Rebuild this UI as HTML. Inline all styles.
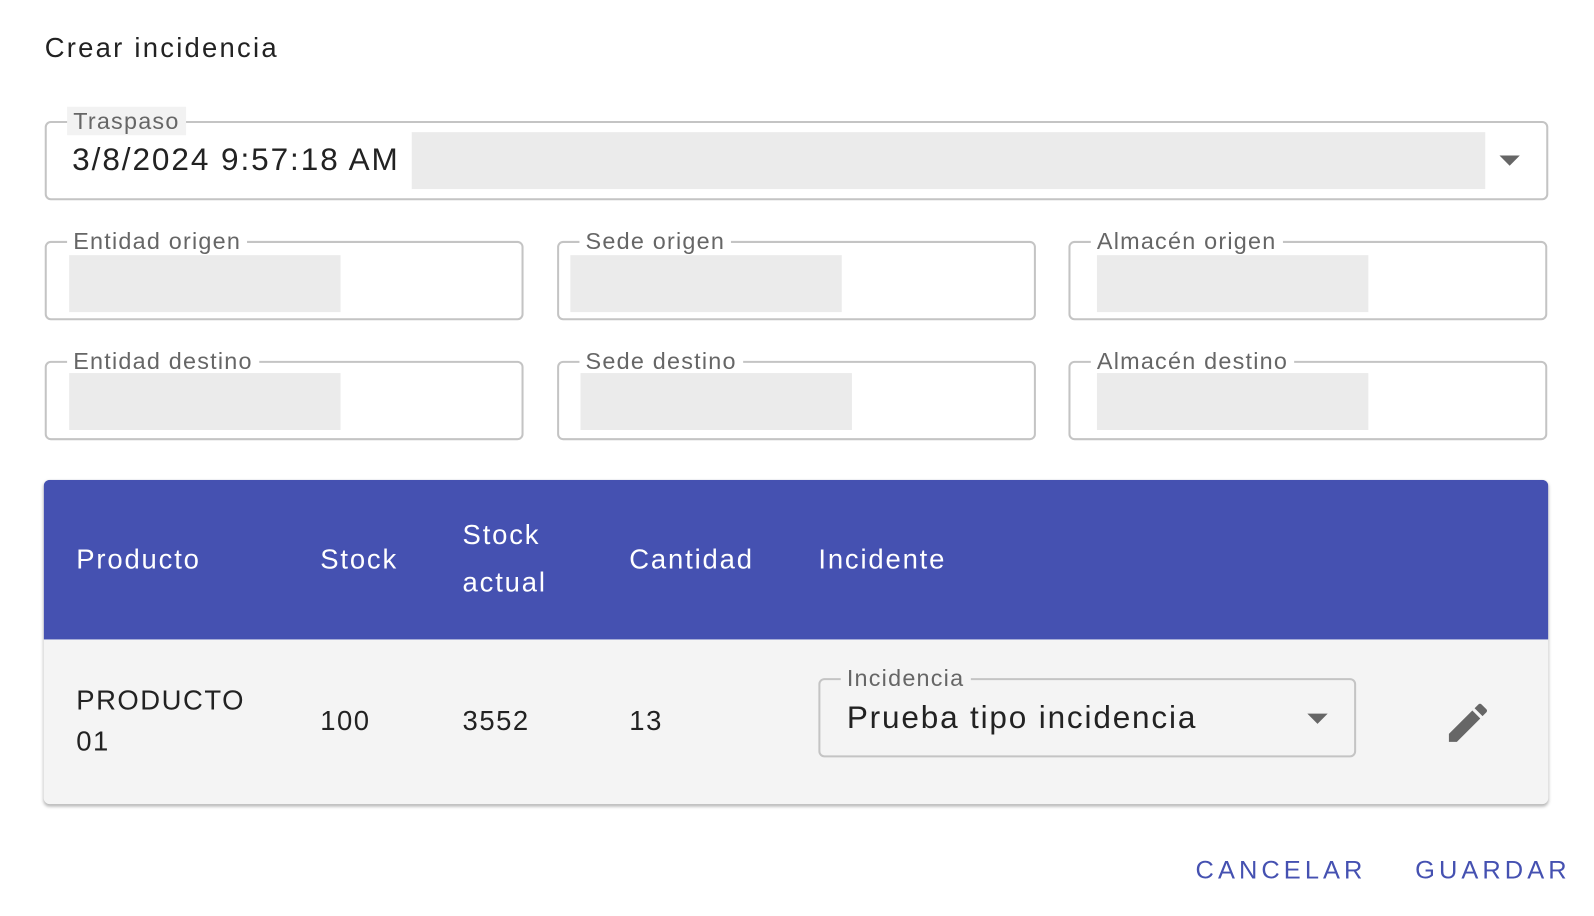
<!DOCTYPE html>
<html><head><meta charset="utf-8"><style>
*{box-sizing:border-box;margin:0;padding:0}
body{width:1594px;height:916px;background:#fff;font-family:"Liberation Sans",sans-serif;position:relative;overflow:hidden;color:#222}
#w{position:absolute;left:0;top:0;width:1568px;height:901px;transform:scale(1.0166);transform-origin:0 0}
.a{position:absolute}
.box{position:absolute;border:2px solid #c4c4c4;border-radius:6px}
.lbl{position:absolute;top:-16px;left:20px;padding:0 6px;background:#fff;font-size:23px;color:#666;line-height:28px;letter-spacing:1.2px}
.ph{position:absolute;background:#ebebeb}
.th{position:absolute;color:#fff;font-size:27px;letter-spacing:1.8px}
.td{position:absolute;color:#222;font-size:27px;letter-spacing:1.5px}
</style></head><body><div id="w">
<div class="a" style="left:44px;top:32px;font-size:27px;letter-spacing:2.2px;color:#222">Crear incidencia</div>

<div class="box" style="left:44px;top:119px;width:1479px;height:78px">
  <div class="lbl" style="background:#f2f2f2;left:20px">Traspaso</div>
</div>
<div class="a" style="left:71px;top:139px;font-size:31px;color:#222;letter-spacing:1.9px">3/8/2024 9:57:18 AM</div>
<div class="ph" style="left:405px;top:130px;width:1056px;height:56px"></div>
<div class="a" style="left:1475px;top:153px;width:0;height:0;border-left:10px solid transparent;border-right:10px solid transparent;border-top:10px solid #666"></div>

<div class="box" style="left:44px;top:237px;width:471px;height:78px"><div class="lbl">Entidad origen</div></div>
<div class="ph" style="left:68px;top:251px;width:267px;height:56px"></div>
<div class="box" style="left:548px;top:237px;width:471px;height:78px"><div class="lbl">Sede origen</div></div>
<div class="ph" style="left:561px;top:251px;width:267px;height:56px"></div>
<div class="box" style="left:1051px;top:237px;width:471px;height:78px"><div class="lbl">Almacén origen</div></div>
<div class="ph" style="left:1079px;top:251px;width:267px;height:56px"></div>

<div class="box" style="left:44px;top:355px;width:471px;height:78px"><div class="lbl">Entidad destino</div></div>
<div class="ph" style="left:68px;top:367px;width:267px;height:56px"></div>
<div class="box" style="left:548px;top:355px;width:471px;height:78px"><div class="lbl">Sede destino</div></div>
<div class="ph" style="left:571px;top:367px;width:267px;height:56px"></div>
<div class="box" style="left:1051px;top:355px;width:471px;height:78px"><div class="lbl">Almacén destino</div></div>
<div class="ph" style="left:1079px;top:367px;width:267px;height:56px"></div>

<div class="a" style="left:43px;top:472px;width:1480px;height:319px;border-radius:6px;box-shadow:0 2px 3px rgba(0,0,0,0.3);overflow:hidden;background:#f4f4f4">
  <div class="a" style="left:0;top:0;width:1480px;height:157px;background:#4551b1"></div>
</div>
<div class="th" style="left:75px;top:535px">Producto</div>
<div class="th" style="left:315px;top:535px">Stock</div>
<div class="th" style="left:455px;top:511px">Stock</div>
<div class="th" style="left:455px;top:558px">actual</div>
<div class="th" style="left:619px;top:535px">Cantidad</div>
<div class="th" style="left:805px;top:535px">Incidente</div>

<div class="td" style="left:75px;top:674px">PRODUCTO</div>
<div class="td" style="left:75px;top:714px">01</div>
<div class="td" style="left:315px;top:694px">100</div>
<div class="td" style="left:455px;top:694px">3552</div>
<div class="td" style="left:619px;top:694px">13</div>

<div class="box" style="left:805px;top:667px;width:529px;height:78px"><div class="lbl" style="background:#f4f4f4">Incidencia</div></div>
<div class="a" style="left:833px;top:688px;font-size:31px;color:#222;letter-spacing:1.8px">Prueba tipo incidencia</div>
<div class="a" style="left:1286px;top:702px;width:0;height:0;border-left:10px solid transparent;border-right:10px solid transparent;border-top:10px solid #666"></div>
<svg class="a" style="left:1419px;top:686px" width="50" height="50" viewBox="0 0 24 24"><path fill="#666" d="M3 17.25V21h3.75L17.81 9.94l-3.75-3.75L3 17.25zM20.71 7.04c.39-.39.39-1.02 0-1.41l-2.34-2.34c-.39-.39-1.02-.39-1.41 0l-1.83 1.83 3.75 3.75 1.83-1.83z"/></svg>

<div class="a" style="left:1176px;top:842px;font-size:25px;color:#4551b1;letter-spacing:4px">CANCELAR</div>
<div class="a" style="left:1392px;top:842px;font-size:25px;color:#4551b1;letter-spacing:4px">GUARDAR</div>
</div></body></html>
